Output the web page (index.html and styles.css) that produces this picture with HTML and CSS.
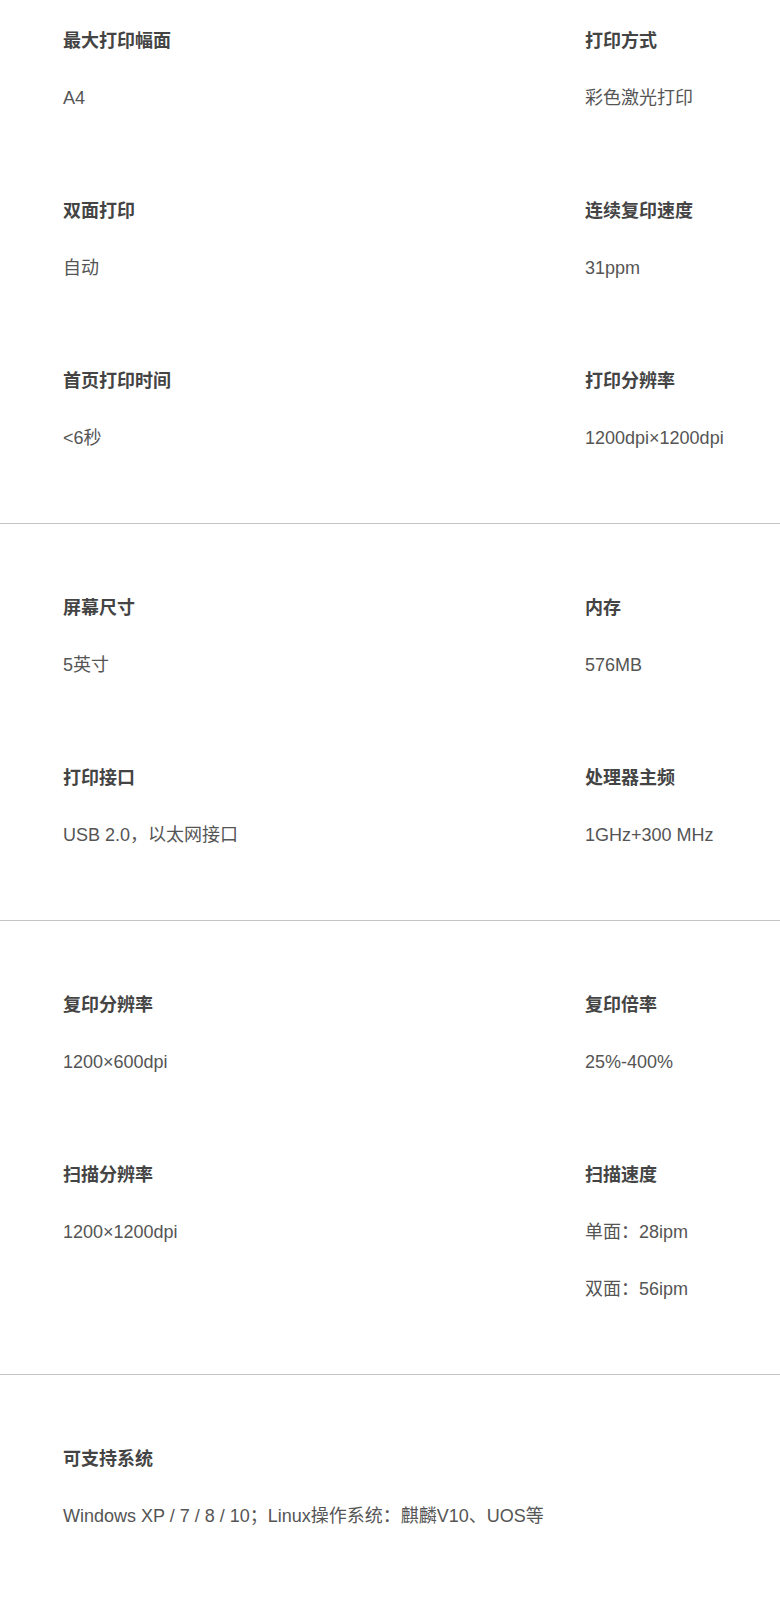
FILE: index.html
```html
<!DOCTYPE html>
<html lang="zh-CN">
<head>
    <meta charset="UTF-8">
    <meta name="viewport" content="width=device-width, initial-scale=1.0">
    <title>产品参数</title>
    <link rel="stylesheet" href="styles.css">
</head>
<body>
    <div class="specs">
        <div class="section first">
            <div class="item">
                <div class="label">最大打印幅面</div>
                <div class="value">A4</div>
            </div>
            <div class="item">
                <div class="label">打印方式</div>
                <div class="value">彩色激光打印</div>
            </div>
            <div class="item">
                <div class="label">双面打印</div>
                <div class="value">自动</div>
            </div>
            <div class="item">
                <div class="label">连续复印速度</div>
                <div class="value">31ppm</div>
            </div>
            <div class="item">
                <div class="label">首页打印时间</div>
                <div class="value">&lt;6秒</div>
            </div>
            <div class="item">
                <div class="label">打印分辨率</div>
                <div class="value">1200dpi×1200dpi</div>
            </div>
        </div>

        <div class="section">
            <div class="item">
                <div class="label">屏幕尺寸</div>
                <div class="value">5英寸</div>
            </div>
            <div class="item">
                <div class="label">内存</div>
                <div class="value">576MB</div>
            </div>
            <div class="item">
                <div class="label">打印接口</div>
                <div class="value">USB 2.0，以太网接口</div>
            </div>
            <div class="item">
                <div class="label">处理器主频</div>
                <div class="value">1GHz+300 MHz</div>
            </div>
        </div>

        <div class="section">
            <div class="item">
                <div class="label">复印分辨率</div>
                <div class="value">1200×600dpi</div>
            </div>
            <div class="item">
                <div class="label">复印倍率</div>
                <div class="value">25%-400%</div>
            </div>
            <div class="item">
                <div class="label">扫描分辨率</div>
                <div class="value">1200×1200dpi</div>
            </div>
            <div class="item">
                <div class="label">扫描速度</div>
                <div class="value">单面：28ipm</div>
                <div class="value">双面：56ipm</div>
            </div>
        </div>

        <div class="section last">
            <div class="item">
                <div class="label">可支持系统</div>
                <div class="value">Windows XP / 7 / 8 / 10；Linux操作系统：麒麟V10、UOS等</div>
            </div>
        </div>
    </div>
</body>
</html>
```

FILE: styles.css
```css
body {
    margin: 0;
    background: #fff;
    font-family: "Liberation Sans", "Noto Sans CJK SC", Arial, sans-serif;
    font-size: 18px;
    color: #555;
}
.section {
    display: grid;
    grid-template-columns: 522px 1fr;
    row-gap: 89px;
    padding: 72px 0 73px 63px;
    border-bottom: 1px solid #c4c4c4;
}
.section.first {
    padding-top: 29px;
}
.section.last {
    grid-template-columns: 1fr;
    border-bottom: none;
}
.label {
    line-height: 24px;
    font-weight: bold;
    color: #444;
}
.value {
    line-height: 24px;
    margin-top: 33px;
    white-space: nowrap;
}
```
